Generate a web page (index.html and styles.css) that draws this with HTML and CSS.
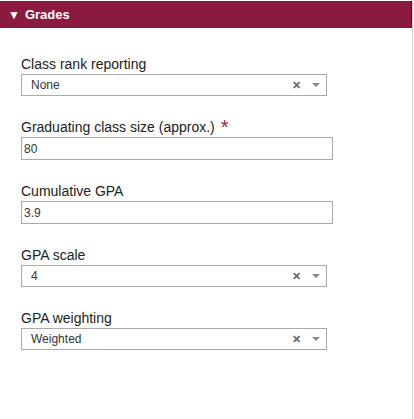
FILE: index.html
```html
<!DOCTYPE html>
<html>
<head>
<meta charset="utf-8">
<link rel="stylesheet" href="styles.css">
</head>
<body>
<div class="panel">
  <div class="header"><span class="caret">&#9660;</span><span class="title">Grades</span></div>
  <div class="form">
    <div class="field">
      <div class="label">Class rank reporting</div>
      <div class="select">
        <span class="value">None</span>
        <span class="clear">&#x2715;</span>
        <span class="arrow"></span>
      </div>
    </div>
    <div class="field">
      <div class="label">Graduating class size (approx.) <span class="req">*</span></div>
      <div class="input">80</div>
    </div>
    <div class="field">
      <div class="label">Cumulative GPA</div>
      <div class="input">3.9</div>
    </div>
    <div class="field">
      <div class="label">GPA scale</div>
      <div class="select">
        <span class="value">4</span>
        <span class="clear">&#x2715;</span>
        <span class="arrow"></span>
      </div>
    </div>
    <div class="field">
      <div class="label">GPA weighting</div>
      <div class="select">
        <span class="value">Weighted</span>
        <span class="clear">&#x2715;</span>
        <span class="arrow"></span>
      </div>
    </div>
  </div>
</div>
</body>
</html>
```
FILE: styles.css
```css
html, body {
  margin: 0;
  padding: 0;
  background: #fff;
  font-family: Arial, "Liberation Sans", sans-serif;
}
.panel {
  width: 413px;
  height: 419px;
  border-right: 1px solid #d4d4d4;
  padding-top: 1px;
  box-sizing: border-box;
}
.header {
  height: 27px;
  background: #8a1a3e;
  color: #fff;
  display: flex;
  align-items: center;
  padding-left: 8px;
  border-right: 1px solid #5a0f28;
}
.caret {
  font-size: 12px;
  margin-right: 5px;
  line-height: 1;
}
.title {
  font-weight: bold;
  font-size: 13px;
}
.form {
  padding: 28px 0 0 21px;
  display: flex;
  flex-direction: column;
  gap: 23px;
}
.label {
  font-size: 14px;
  line-height: 16px;
  color: #222;
  margin-bottom: 2px;
  display: flex;
  align-items: flex-start;
}
.req {
  color: #9c1f48;
  font-size: 20px;
  line-height: 14px;
  margin-left: 6px;
  margin-top: 1px;
}
.select {
  width: 306px;
  height: 22px;
  box-sizing: border-box;
  border: 1px solid #aaa;
  display: flex;
  align-items: center;
  padding-left: 9px;
  font-size: 12px;
  color: #333;
}
.select .value {
  flex: 1;
}
.clear {
  font-size: 11px;
  color: #666;
  font-weight: bold;
  margin-right: 11px;
}
.arrow {
  width: 0;
  height: 0;
  border-left: 4px solid transparent;
  border-right: 4px solid transparent;
  border-top: 4px solid #888;
  margin-right: 6px;
}
.input {
  width: 312px;
  height: 23px;
  box-sizing: border-box;
  border: 1px solid #aaa;
  display: flex;
  align-items: center;
  padding-left: 2px;
  font-size: 12px;
  color: #333;
}
```
